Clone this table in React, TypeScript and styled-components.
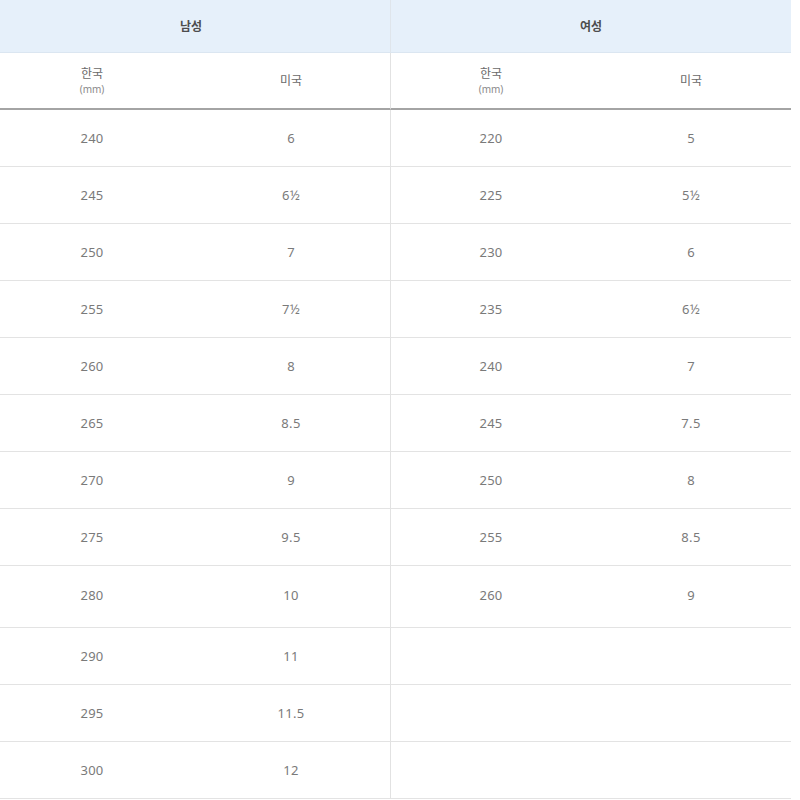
import React from 'react';
import styled, { createGlobalStyle } from 'styled-components';

const GlobalStyle = createGlobalStyle`
  html, body {
    margin: 0;
    padding: 0;
    background: #ffffff;
    overflow: hidden;
  }
  body {
    font-family: "Noto Sans", "Noto Sans CJK KR", sans-serif;
    -webkit-font-smoothing: antialiased;
  }
`;

// the table is a little wider than the view and starts 8px off the left edge
const Table = styled.div`
  width: 799px;
  margin-left: -8px;
  display: grid;
  grid-template-columns: 200px 199px 200px 200px;
`;

const GroupHead = styled.div<{ $split?: boolean }>`
  grid-column: span 2;
  height: 53px;
  display: flex;
  align-items: center;
  justify-content: center;
  background: #e6f0fa;
  border-bottom: 1px solid #dbe6f1;
  box-sizing: border-box;
  color: #4d4d4d;
  font-size: 12px;
  font-weight: 600;
  border-right: ${({ $split }) => ($split ? '1px solid #dfe5eb' : 'none')};
`;

const SubHead = styled.div<{ $split?: boolean }>`
  height: 57px;
  display: flex;
  flex-direction: column;
  align-items: center;
  justify-content: center;
  box-sizing: border-box;
  border-bottom: 2px solid #a4a4a4;
  border-right: ${({ $split }) => ($split ? '1px solid #e2e2e2' : 'none')};
  color: #6a6a6a;
  font-size: 12px;
  line-height: 16px;
`;

const Unit = styled.span`
  font-size: 10px;
  color: #8a8a8a;
  line-height: 14px;
`;

const Cell = styled.div<{ $split?: boolean; $tall?: boolean }>`
  height: ${({ $tall }) => ($tall ? '62px' : '57px')};
  padding-bottom: ${({ $tall }) => ($tall ? '4px' : '0')};
  display: flex;
  align-items: center;
  justify-content: center;
  box-sizing: border-box;
  border-bottom: 1px solid #e3e3e3;
  border-right: ${({ $split }) => ($split ? '1px solid #e2e2e2' : 'none')};
  color: #7a7a7a;
  font-size: 13px;
  letter-spacing: 0.3px;
`;

const men = [
  ['240', '6'],
  ['245', '6½'],
  ['250', '7'],
  ['255', '7½'],
  ['260', '8'],
  ['265', '8.5'],
  ['270', '9'],
  ['275', '9.5'],
  ['280', '10'],
  ['290', '11'],
  ['295', '11.5'],
  ['300', '12'],
];

const women = [
  ['220', '5'],
  ['225', '5½'],
  ['230', '6'],
  ['235', '6½'],
  ['240', '7'],
  ['245', '7.5'],
  ['250', '8'],
  ['255', '8.5'],
  ['260', '9'],
];

const App: React.FC = () => (
  <>
    <GlobalStyle />
    <Table>
      <GroupHead $split>남성</GroupHead>
      <GroupHead>여성</GroupHead>

      <SubHead>
        한국
        <Unit>(mm)</Unit>
      </SubHead>
      <SubHead $split>미국</SubHead>
      <SubHead>
        한국
        <Unit>(mm)</Unit>
      </SubHead>
      <SubHead>미국</SubHead>

      {men.map(([kr, us], i) => {
        const w = women[i];
        const tall = i === 8;
        return (
          <React.Fragment key={kr}>
            <Cell $tall={tall}>{kr}</Cell>
            <Cell $tall={tall} $split>{us}</Cell>
            <Cell $tall={tall}>{w ? w[0] : ''}</Cell>
            <Cell $tall={tall}>{w ? w[1] : ''}</Cell>
          </React.Fragment>
        );
      })}
    </Table>
  </>
);

export default App;
